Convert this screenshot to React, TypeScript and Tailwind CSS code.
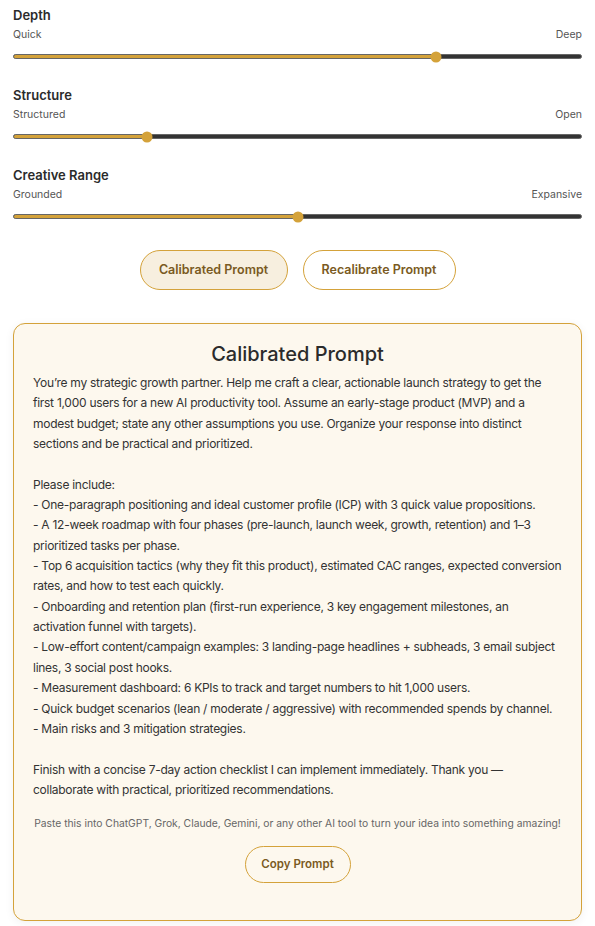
import React from "react"

const font = { fontFamily: "Inter, 'Noto Sans', sans-serif" }

function Slider({ label, left, right, value }: { label: string; left: string; right: string; value: number }) {
  return (
    <div className="mb-[28px]">
      <div className="text-[13px] font-semibold text-[#2b2b2b] leading-[16px]">{label}</div>
      <div className="mt-[5px] flex justify-between text-[10.5px] text-[#555] leading-[14px]">
        <span>{left}</span>
        <span>{right}</span>
      </div>
      <div className="relative mt-[12px] h-[5px] rounded-full bg-[#333333] border border-[#666]">
        <div className="h-full rounded-l-full bg-[#d4a23a]" style={{ width: `${value}%` }} />
        <div
          className="absolute top-1/2 h-[11px] w-[11px] -translate-x-1/2 -translate-y-1/2 rounded-full bg-[#d4a23a]"
          style={{ left: `${value}%` }}
        />
      </div>
    </div>
  )
}

const prompt = `You’re my strategic growth partner. Help me craft a clear, actionable launch strategy to get the first 1,000 users for a new AI productivity tool. Assume an early-stage product (MVP) and a modest budget; state any other assumptions you use. Organize your response into distinct sections and be practical and prioritized.

Please include:
- One-paragraph positioning and ideal customer profile (ICP) with 3 quick value propositions.
- A 12-week roadmap with four phases (pre-launch, launch week, growth, retention) and 1–3 prioritized tasks per phase.
- Top 6 acquisition tactics (why they fit this product), estimated CAC ranges, expected conversion rates, and how to test each quickly.
- Onboarding and retention plan (first-run experience, 3 key engagement milestones, an activation funnel with targets).
- Low-effort content/campaign examples: 3 landing-page headlines + subheads, 3 email subject lines, 3 social post hooks.
- Measurement dashboard: 6 KPIs to track and target numbers to hit 1,000 users.
- Quick budget scenarios (lean / moderate / aggressive) with recommended spends by channel.
- Main risks and 3 mitigation strategies.

Finish with a concise 7-day action checklist I can implement immediately. Thank you — collaborate with practical, prioritized recommendations.`

export default function App() {
  return (
    <div className="min-h-[926px] bg-white px-[13px] pt-[7px] text-[#2b2b2b]" style={font}>
      <Slider label="Depth" left="Quick" right="Deep" value={74.5} />
      <Slider label="Structure" left="Structured" right="Open" value={23.5} />
      <Slider label="Creative Range" left="Grounded" right="Expansive" value={50} />

      <div className="mt-[31px] flex justify-center gap-[15px]">
        <button className="h-[40px] w-[148px] rounded-full border border-[#d4a23a] bg-[#f7efdf] text-[12.5px] font-semibold text-[#7a5a22]">
          Calibrated Prompt
        </button>
        <button className="h-[40px] w-[153px] rounded-full border border-[#d4a23a] bg-white text-[12.5px] font-semibold text-[#7a5a22]">
          Recalibrate Prompt
        </button>
      </div>

      <div className="mt-[33px] rounded-[12px] border border-[#d4a23a] bg-[#fdf8ee] px-[19px] pt-[16px] pb-[37px] shadow-[0_2px_10px_rgba(0,0,0,0.06)]">
        <h2 className="text-center text-[20px] font-medium leading-[28px] text-[#2b2b2b]">Calibrated Prompt</h2>
        <p className="mt-[5px] whitespace-pre-line text-[12px] tracking-[-0.27px] leading-[20.35px] text-[#333]">{prompt}</p>
        <p className="mt-[16px] whitespace-nowrap text-center text-[10.3px] leading-[14px] text-[#666]">
          Paste this into ChatGPT, Grok, Claude, Gemini, or any other AI tool to turn your idea into something amazing!
        </p>
        <div className="mt-[16px] flex justify-center">
          <button className="h-[37px] w-[106px] rounded-full border border-[#d4a23a] bg-transparent text-[11.5px] font-semibold text-[#7a5a22]">
            Copy Prompt
          </button>
        </div>
      </div>
      <div className="h-[6px]" />
    </div>
  )
}
